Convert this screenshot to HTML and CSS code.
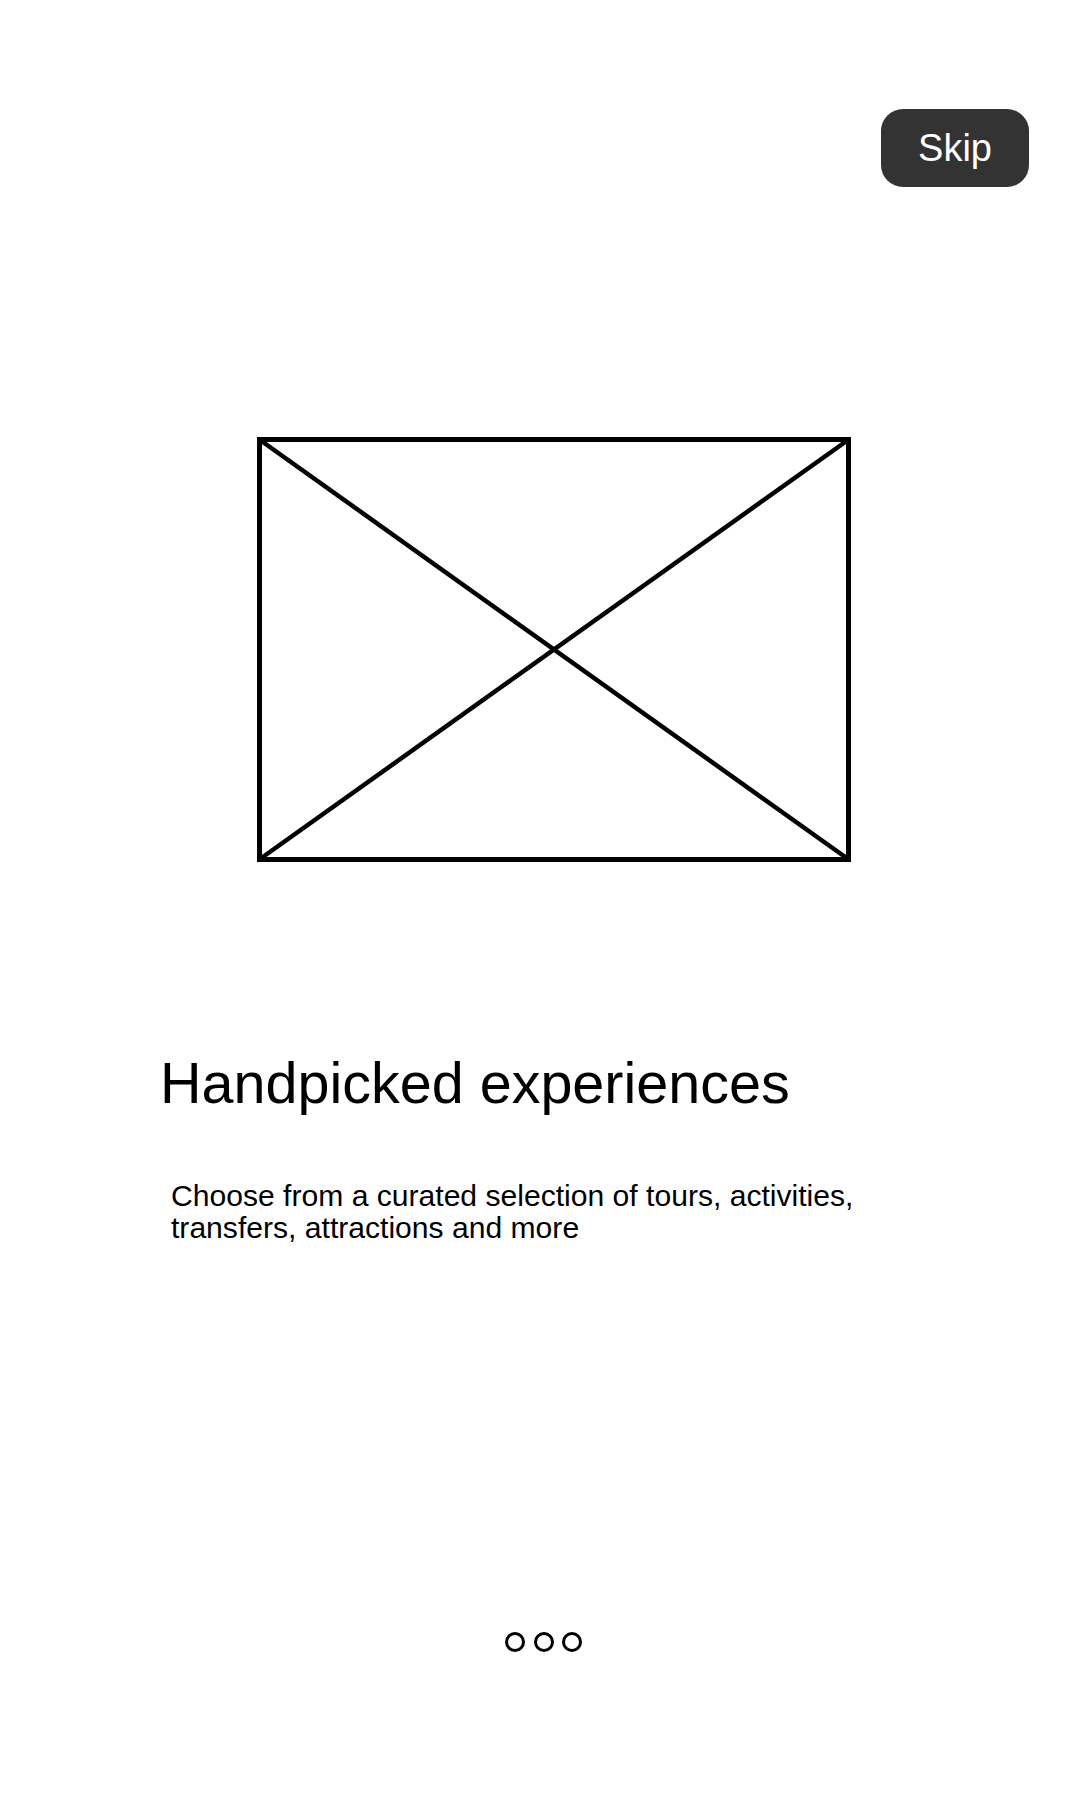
FILE: index.html
```html
<!DOCTYPE html>
<html lang="en">
<head>
<meta charset="utf-8">
<title>Onboarding</title>
<link rel="stylesheet" href="styles.css">
</head>
<body>
<div class="screen">
  <header class="topbar">
    <button class="skip">Skip</button>
  </header>
  <div class="hero">
    <svg class="placeholder" width="594" height="425" viewBox="0 0 594 425">
      <rect x="2.5" y="2.5" width="589" height="420" fill="none" stroke="#000" stroke-width="5"/>
      <line x1="3" y1="3" x2="591" y2="422" stroke="#000" stroke-width="4.5"/>
      <line x1="591" y1="3" x2="3" y2="422" stroke="#000" stroke-width="4.5"/>
    </svg>
  </div>
  <h1 class="title">Handpicked experiences</h1>
  <p class="desc">Choose from a curated selection of tours, activities,<br>transfers, attractions and more</p>
  <div class="dots">
    <span class="dot"></span>
    <span class="dot"></span>
    <span class="dot"></span>
  </div>
</div>
</body>
</html>
```

FILE: styles.css
```css
html, body {
  margin: 0;
  padding: 0;
  background: #fff;
}
body {
  font-family: "Liberation Sans", Arial, sans-serif;
  color: #000;
}
.screen {
  width: 1080px;
  height: 1800px;
  display: flex;
  flex-direction: column;
}
.topbar {
  display: flex;
  justify-content: flex-end;
  padding: 109px 51px 0 0;
}
.skip {
  width: 148px;
  height: 78px;
  border: none;
  border-radius: 22px;
  background: #333333;
  color: #fff;
  font-family: "Liberation Sans", Arial, sans-serif;
  font-size: 38px;
  line-height: 1;
  padding: 0;
  display: flex;
  align-items: center;
  justify-content: center;
}
.hero {
  margin: 250px 0 0 257px;
  display: flex;
}
.placeholder {
  display: block;
}
.title {
  margin: 193px 0 0 160px;
  font-size: 57.5px;
  line-height: 57px;
  font-weight: 400;
}
.desc {
  margin: 68px 0 0 171px;
  font-size: 30.1px;
  line-height: 32px;
}
.dots {
  margin: 388px 0 0 505px;
  display: flex;
  gap: 8.5px;
}
.dot {
  width: 14px;
  height: 14px;
  border: 3px solid #000;
  border-radius: 50%;
}
```
